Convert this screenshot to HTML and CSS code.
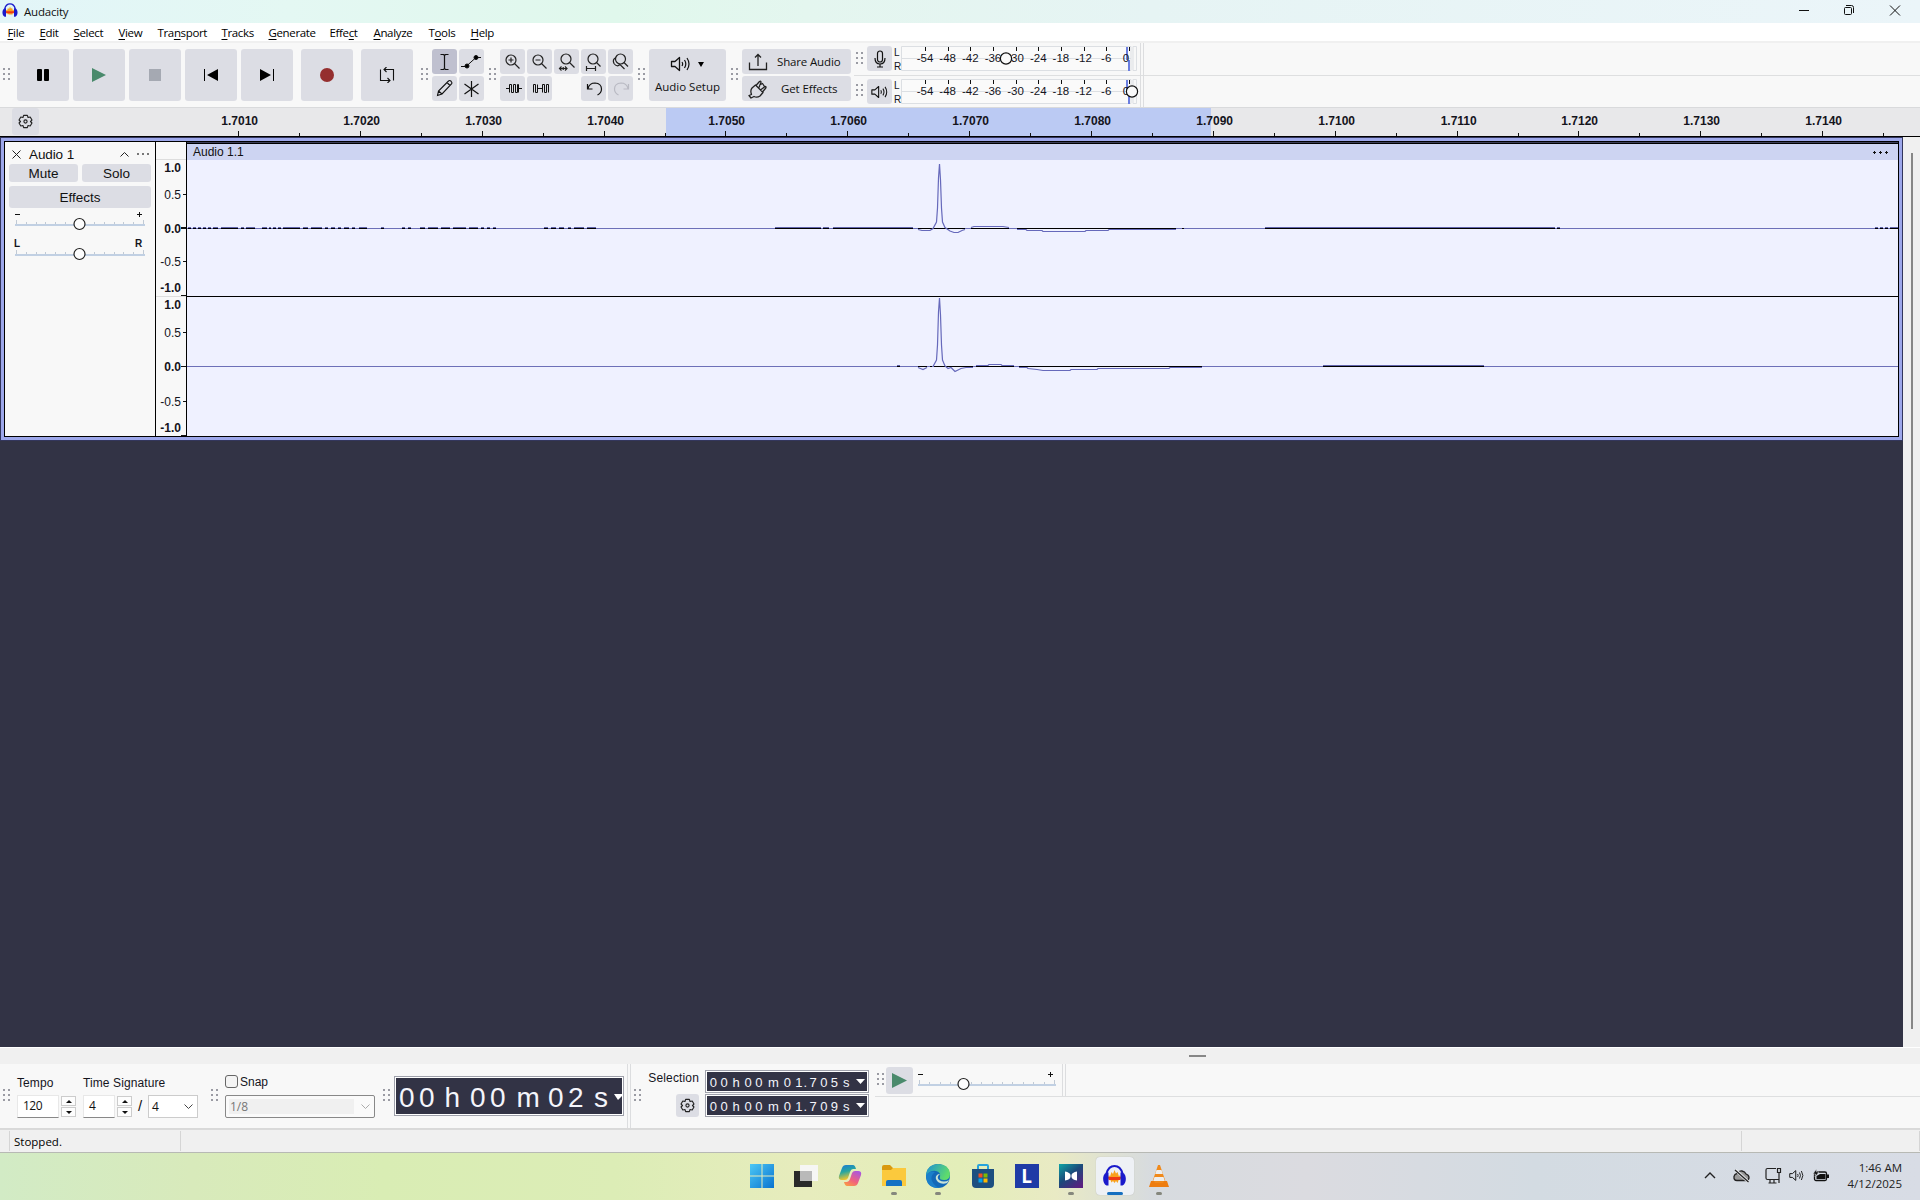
FILE: index.html
```html
<!DOCTYPE html>
<html lang="en">
<head>
<meta charset="utf-8">
<title>Audacity</title>
<link rel="stylesheet" href="styles.css">
</head>
<body>
<svg width="0" height="0" class="defs">
  <defs>
    <symbol id="grip" viewBox="0 0 8 13"><path d="M0 0h2v2H0zM5 0h2v2H5zM0 5h2v2H0zM5 5h2v2H5zM0 10h2v2H0zM5 10h2v2H5z" fill="#9a9ba3"/></symbol>
    <symbol id="gear" viewBox="0 0 16 16"><path d="M6 1.500h4l.7 2.200 2.300-.5 1.900 3.300L13.300 8l1.600 1.600-1.900 3.200-2.300-.5-.7 2.200H6l-.7-2.200-2.300.5-1.900-3.200L2.700 8 1.100 6.500 3 3.200l2.300.5z" fill="none" stroke="#222" stroke-width="1.200" stroke-linejoin="round"/><circle cx="8" cy="8" r="1.700" fill="none" stroke="#222" stroke-width="1.200"/></symbol>
    <symbol id="speaker" viewBox="0 0 20 16"><path d="M1 5.500h3.500L9 1.500v13L4.500 10.500H1z" fill="none" stroke="#111" stroke-width="1.300" stroke-linejoin="round"/><path d="M11.500 6q1.300 2 0 4M14 4q2.600 4 0 8M16.500 2q4 6 0 12" fill="none" stroke="#111" stroke-width="1.200"/></symbol>
    <symbol id="headphones" viewBox="0 0 24 22"><path d="M4 8.500Q6 1 12 1t8 7.500" fill="none" stroke="#1a1acb" stroke-width="2"/><path d="M5 13l1.500-3 1 1.500L9 7l1.500 2L12 5l1.500 3.500L15 7l1.500 4.500 1-1.500L19 13l-1.500 2-1-1-1.500 4-1.500-2-1.500 2-1.500-2L9 17.500 7.500 14l-1 1.500z" fill="#f9a11c"/><path d="M5.500 12h13l-1 3h-11z" fill="#ee3a16"/><path d="M4.500 7.500C0 8-1 18 4 20.500h2v-13zM19.500 7.500C24 8 25 18 20 20.500h-2v-13z" fill="#1a1acb"/></symbol>
  </defs>
</svg>

<header class="titlebar">
  <svg class="app-icon" width="16" height="15"><use href="#headphones"/></svg>
  <span class="app-name">Audacity</span>
  <svg class="window-controls" width="104" height="12" fill="none" stroke="#111"><path d="M0 5.500h10"/><path d="M45.500 3.500q0-1 1-1h5q1 0 1 1v5q0 1-1 1h-5q-1 0-1-1zM47 .5h5.500q2 0 2 2V8M91 .5l10 10M101 .5l-10 10"/></svg>
</header>

<nav class="menu">
  <span><u>F</u>ile</span><span><u>E</u>dit</span><span><u>S</u>elect</span><span><u>V</u>iew</span><span>Tra<u>n</u>sport</span><span><u>T</u>racks</span><span><u>G</u>enerate</span><span>Effe<u>c</u>t</span><span><u>A</u>nalyze</span><span>T<u>o</u>ols</span><span><u>H</u>elp</span>
</nav>

<section class="toolbar">
  <svg class="grip"><use href="#grip"/></svg>
  <div class="transport">
    <div class="button"><svg width="14" height="14"><rect x="1" y="1" width="5" height="12" rx="1"/><rect x="8" y="1" width="5" height="12" rx="1"/></svg></div>
    <div class="button"><svg width="14" height="14"><path d="M0 0l14 7-14 7z" fill="#4a8a6c"/></svg></div>
    <div class="button"><svg width="12" height="12"><path d="M0 0h12v12H0z" fill="#a5a9b2"/></svg></div>
    <div class="button"><svg width="14" height="12"><path d="M0 0h1v12H0zM14 0v12L3 6z"/></svg></div>
    <div class="button"><svg width="14" height="12"><path d="M13 0h1v12h-1zM0 0v12l11-6z"/></svg></div>
    <div class="button record"><svg width="14" height="14"><circle cx="7" cy="7" r="7" fill="#952f2f"/></svg></div>
    <div class="button loop"><svg width="16" height="16" fill="none" stroke="#111" stroke-width="1.100"><path d="M1.500 2.500v11H11M14.500 13.500v-11H5M7.500 0L5 2.500 7.500 5M8.500 11l2.500 2.500L8.500 16"/></svg></div>
  </div>
  <svg class="grip g-tools"><use href="#grip"/></svg>
  <div class="tools">
    <div class="button active"><svg width="25" height="25" fill="none" stroke="#111" stroke-width="1.200"><path d="M8.500 5.500h3l1 1 1-1h3M8.500 20.500h3l1-1 1 1h3M12.500 6.500v13"/></svg></div>
    <div class="button"><svg width="25" height="25" stroke="#111"><path d="M2 17.500h5l10-9h5" fill="none"/><circle cx="8" cy="17" r="2"/><circle cx="17" cy="8.500" r="2"/></svg></div>
    <div class="button"><svg width="25" height="25" fill="none" stroke="#111" stroke-width="1.100"><path d="M5.500 19.500l1-4.500L16.500 5q1.200-1 2.300 0l.7.800q1 1 0 2.200L10 18zM15 6.500l3 3M6.500 15l3.500 3"/></svg></div>
    <div class="button"><svg width="25" height="25" stroke="#111" stroke-width="1.200"><path d="M12.500 5v16M5.500 8l14 10M19.500 8l-14 10"/></svg></div>
  </div>
  <svg class="grip g-edit"><use href="#grip"/></svg>
  <div class="edit">
    <div class="button"><svg width="25" height="25" fill="none" stroke="#222" stroke-width="1.200"><circle cx="11" cy="11" r="5"/><path d="M14.500 14.500l5 5M8.500 11h5M11 8.500v5"/></svg></div>
    <div class="button"><svg width="25" height="25" fill="none" stroke="#222" stroke-width="1.200"><circle cx="11" cy="11" r="5"/><path d="M14.500 14.500l5 5M8.500 11h5"/></svg></div>
    <div class="button"><svg width="25" height="25" fill="none" stroke="#222" stroke-width="1.200"><circle cx="12" cy="10" r="5"/><path d="M15.500 13.500l5 5M5 19.500h8M7.500 17.500l-2 2 2 2M11 17.500l2 2-2 2M9.200 18v3"/></svg></div>
    <div class="button"><svg width="25" height="25" fill="none" stroke="#222" stroke-width="1.200"><circle cx="12" cy="10" r="5"/><path d="M15.500 13.500l4 4M5 19.500h10M5.500 17v5M14.500 17v5"/></svg></div>
    <div class="button"><svg width="25" height="25" fill="none" stroke="#222" stroke-width="1.200"><circle cx="12.500" cy="10" r="5"/><path d="M16 13.500l4 4M8 8.500q-4 2-2 6 3 4 6 1l4.500 4.500"/></svg></div>
    <div class="button"><svg width="25" height="25" fill="none" stroke="#111"><path d="M6 12.500h3.500M18.500 12.500H22M9.500 16.500V8.500h2v8h2v-8h2v8h2v-8h1v8"/></svg></div>
    <div class="button"><svg width="25" height="25" fill="none" stroke="#111"><path d="M10.500 12.500h5M6.500 16.500v-8h2v8h2v-8M15.500 16.500v-8h2v8h2v-8h2v8"/></svg></div>
    <div></div>
    <div class="button"><svg width="25" height="25" fill="none" stroke="#111" stroke-width="1.200"><path d="M7 12.500q1.500-5.500 7-5.500 6.500.500 6.500 6 0 4-4 6M6.500 8v5h5"/></svg></div>
    <div class="button"><svg width="25" height="25" fill="none" stroke="#b9bac3" stroke-width="1.200"><path d="M20 12.500Q18.500 7 13 7q-6.500.500-6.500 6 0 4 4 6M20.500 8v5h-5"/></svg></div>
  </div>
  <svg class="grip g-setup"><use href="#grip"/></svg>
  <div class="button setup">
    <div class="setup-icon"><svg width="21" height="16"><use href="#speaker"/></svg><svg width="6" height="5"><path d="M0 0h6L3 5z"/></svg></div>
    <span>Audio Setup</span>
  </div>
  <svg class="grip g-share"><use href="#grip"/></svg>
  <div class="share">
    <div class="button"><svg width="20" height="18" fill="none" stroke="#222" stroke-width="1.300"><path d="M1.500 9.500v7h17v-7M10 13V1.500M7 4.500l3-3 3 3"/></svg><span class="share-label">Share Audio</span></div>
    <div class="button"><svg width="20" height="20" fill="none" stroke="#222" stroke-width="1.300" stroke-linejoin="round"><path d="M1 16.500l2.500-1q-1.500-4 .5-6.500l3.500-3 7.500 7.500-3 3.500q-3 2-6 .5L3 19zM8 6.500l3.500-4q1.500-1 1.500.8L11 8.500M12.500 11l4.500-3.500q1.500 0 .8 1.500L14.500 13M11.500 6l3-1.500 2 3"/></svg><span class="effects-label">Get Effects</span></div>
  </div>
  <div class="meters">
    <div class="meter-row">
      <svg class="grip"><use href="#grip"/></svg>
      <div class="button"><svg width="12" height="18" fill="none" stroke="#111" stroke-width="1.200"><rect x="3.500" y="1" width="5" height="11" rx="2.500"/><path d="M1 8q0 6 5 6t5-6M6 14v3M3 17h6"/></svg></div>
      <svg class="meter" width="245" height="27" data-knob="113"></svg>
      <div class="divider"></div>
    </div>
    <div class="meter-row playback">
      <svg class="grip"><use href="#grip"/></svg>
      <div class="button"><svg width="17" height="14"><use href="#speaker"/></svg></div>
      <svg class="meter" width="245" height="27" data-knob="239"></svg>
      <div class="divider"></div>
    </div>
  </div>
</section>

<section class="timeline">
  <div class="button timeline-options"><svg width="15" height="15"><use href="#gear"/></svg></div>
  <svg id="ruler" width="1920" height="30" viewBox="0 107 1920 30"></svg>
</section>

<main class="project">
  <div class="tracks">
    <div class="track">
      <aside class="track-panel">
        <div class="track-head"><svg width="9" height="9" stroke="#222"><path d="M.5.5l8 8M8.500.5l-8 8"/></svg><span>Audio 1</span><svg width="9" height="5" fill="none" stroke="#222"><path d="M.5 4.500l4-4 4 4"/></svg><svg width="13" height="2"><path d="M0 0h2v2H0zM5 0h2v2H5zM10 0h2v2h-2z" fill="#777"/></svg></div>
        <div class="track-buttons"><div class="button">Mute</div><div class="button">Solo</div></div>
        <div class="button fx">Effects</div>
        <svg class="slider" width="134" height="22" data-w="130" data-at="65" data-l="−" data-r="+"></svg>
        <svg class="slider pan" width="134" height="22" data-w="130" data-at="65" data-l="L" data-r="R"></svg>
      </aside>
      <svg id="amplitude" width="30" height="296" viewBox="156 141 30 296"></svg>
      <div class="clip">
        <div class="clip-head"><span>Audio 1.1</span><svg width="15" height="3"><path d="M1 0h1v1h1v1H2v1H1V2H0V1h1zM7 0h1v1h1v1H8v1H7V2H6V1h1zM13 0h1v1h1v1h-1v1h-1V2h-1V1h1z" fill="#111"/></svg></div>
        <svg id="wave" width="1711" height="276" viewBox="187 160 1711 276"></svg>
      </div>
    </div>
  </div>
  <div class="v-scroll"><div class="v-thumb"></div></div>
</main>
<div class="h-scroll"><div class="h-thumb"></div></div>

<section class="bottom">
  <svg class="grip"><use href="#grip"/></svg>
  <div class="time-sig">
    <span class="arial">Tempo</span><span class="arial ts-label">Time Signature</span>
    <div class="fields">
      <div class="field tempo">120</div><div class="spin"><i></i><i class="down"></i></div>
      <div class="field beats">4</div><div class="spin"><i></i><i class="down"></i></div>
      <span class="slash">/</span>
      <div class="combo"><span>4</span><svg width="9" height="5" fill="none" stroke="#444"><path d="M.5.5l4 4 4-4"/></svg></div>
    </div>
  </div>
  <svg class="grip g-snap"><use href="#grip"/></svg>
  <div class="snap">
    <div class="snap-check"><i></i><span class="arial">Snap</span></div>
    <div class="combo disabled"><span>1/8</span><svg width="9" height="5" fill="none" stroke="#aaa"><path d="M.5.5l4 4 4-4"/></svg></div>
  </div>
  <svg class="grip g-time"><use href="#grip"/></svg>
  <svg class="time-big" width="230" height="40" viewBox="394 1076 230 40"><rect x="394.500" y="1076.500" width="229" height="39" fill="#fff" stroke="#9fa1ab"/><path d="M396 1078h226v36H396z" fill="#323345"/><text y="1107" x="399 419 444.500 470 490 516.500 548 568 594" font-size="28">00h00m02s</text><path d="M614 1094h8v2l-4 4z" fill="#fff"/></svg>
  <div class="divider"></div>
  <svg class="grip g-sel"><use href="#grip"/></svg>
  <div class="selection-side"><span class="arial">Selection</span><div class="button"><svg width="15" height="15"><use href="#gear"/></svg></div></div>
  <div class="selection-times">
    <svg width="164" height="23" viewBox="705 1070 164 23"><rect x="705.500" y="1070.500" width="163" height="22" fill="#fff" stroke="#9fa1ab"/><path d="M707 1072h160v19H707z" fill="#323345"/><text y="1087" x="709.700 720.500 732.500 744.500 755.200 768 783.700 795.200 803.500 809.500 820.200 830.800 843" font-size="13">00h00m01.705s</text><path d="M856 1079h9l-4.500 5z" fill="#fff"/></svg>
    <svg width="164" height="23" viewBox="705 1070 164 23"><rect x="705.500" y="1070.500" width="163" height="22" fill="#fff" stroke="#9fa1ab"/><path d="M707 1072h160v19H707z" fill="#323345"/><text y="1087" x="709.700 720.500 732.500 744.500 755.200 768 783.700 795.200 803.500 809.500 820.200 830.800 843" font-size="13">00h00m01.709s</text><path d="M856 1079h9l-4.500 5z" fill="#fff"/></svg>
  </div>
  <div class="speed">
    <svg class="grip"><use href="#grip"/></svg>
    <div class="button"><svg width="15" height="15"><path d="M0 0l15 7.500L0 15z" fill="#4a8a6c"/></svg></div>
    <svg class="slider" width="142" height="22" data-w="138" data-at="46" data-l="−" data-r="+"></svg>
    <div class="divider"></div>
  </div>
</section>

<footer class="status"><span class="s0"></span><span class="s1">Stopped.</span><span class="s2"></span><span class="s3"></span></footer>

<section class="taskbar">
  <div class="apps">
    <div><svg width="24" height="24"><defs><linearGradient id="win" x2="1" y2="1"><stop stop-color="#4cc8f5"/><stop offset="1" stop-color="#0873d0"/></linearGradient></defs><path d="M0 0h11.500v11.500H0zM12.500 0H24v11.500H12.500zM0 12.500h11.500V24H0zM12.500 12.500H24V24H12.500z" fill="url(#win)"/></svg></div>
    <div><svg width="24" height="24"><path d="M6 1h18v16H6z" fill="#f6f6f4"/><path d="M0 7h18v16H0z" fill="#2a2a2a"/><path d="M6 7h12v10H6z" fill="#b9b9b9"/></svg></div>
    <div><svg width="24" height="24"><defs><linearGradient id="cpA" x2=".3" y2="1"><stop stop-color="#1c78d8"/><stop offset=".5" stop-color="#27a6a0"/><stop offset="1" stop-color="#f3c52a"/></linearGradient><linearGradient id="cpB" x1=".8" x2=".2" y2="1"><stop stop-color="#a857e0"/><stop offset=".6" stop-color="#f0627e"/><stop offset="1" stop-color="#fa9a45"/></linearGradient></defs><path d="M8 1h7q2 0 3 4h-3q-2 0-3 3l-2 6q-1 2-3 2H4q-4 0-3-4l3-8q1-3 4-3z" fill="url(#cpA)"/><path d="M16 22H9q-2 0-3-4h3q2 0 3-3l2-6q1-2 3-2h3q4 0 3 4l-3 8q-1 3-4 3z" fill="url(#cpB)"/></svg></div>
    <div class="running"><svg width="26" height="24"><path d="M1 3q0-2 2-2h6l3 3h12q1 0 1 2v6H1z" fill="#d9990f"/><path d="M1 6h9l2-2h13v18H1z" fill="#fbc93d"/><path d="M5 22v-4q0-2 2-2h12q2 0 2 2v4z" fill="#1472c4"/></svg></div>
    <div class="running"><svg width="24" height="24"><defs><linearGradient id="edge" x2="1" y2=".4"><stop stop-color="#1b8fd8"/><stop offset="1" stop-color="#5fdc6b"/></linearGradient></defs><circle cx="12" cy="12" r="12" fill="#1269b8"/><path d="M0 10Q2 0 12 0q11 0 12 10 0 6-6 6-5 0-4-3 1-5-4-6Q4 6 0 12z" fill="url(#edge)"/><path d="M14 10q-4 3-1 6 5 3 10 0-1 2-2 3-5 2-9-1-4-4-1-7 1-1 3-1z" fill="#c9e3d8"/><path d="M0 11q4-5 9-3-5 4-3 9 3 6 8 7Q0 25 0 11z" fill="#1a7fca"/></svg></div>
    <div><svg width="24" height="24"><path d="M7 5V2q0-1 1-1h8q1 0 1 1v3" fill="none" stroke="#27a3dc" stroke-width="2"/><path d="M1 5h22v15q0 4-4 4H5q-4 0-4-4z" fill="#1d4f80"/><path d="M7.500 9.500h4v4h-4z" fill="#f25022"/><path d="M12.500 9.500h4v4h-4z" fill="#7fba00"/><path d="M7.500 14.500h4v4h-4z" fill="#00a4ef"/><path d="M12.500 14.500h4v4h-4z" fill="#ffb900"/></svg></div>
    <div><div class="l-app">L</div></div>
    <div class="running"><svg width="24" height="24"><defs><linearGradient id="cap" x2=".8" y2="1"><stop stop-color="#0ea5a5"/><stop offset=".5" stop-color="#1b4a7a"/><stop offset="1" stop-color="#5a1f80"/></linearGradient></defs><path d="M0 0h24v24H0z" fill="url(#cap)"/><path d="M6 7.500q5 1 5.500 3.500v2Q11 15.500 6 16.500zM18 7.500q-5 1-5.500 3.500v2q.5 2.500 5.500 3.500z" fill="#fff"/></svg></div>
    <div class="running current"><svg width="25" height="22"><use href="#headphones"/></svg></div>
    <div class="running"><svg width="22" height="24"><path d="M10 1h2l6 18H4z" fill="#f08a1c"/><path d="M8.500 6h5l1.300 4H7.200zM6.500 13h9l1.300 4H5.200z" fill="#eee"/><path d="M3 17h3l1 2h8l1-2h3l2 6H1z" fill="#ee7d10"/></svg></div>
  </div>
  <div class="tray">
    <svg width="12" height="7" fill="none" stroke="#222" stroke-width="1.400"><path d="M1 6l5-5 5 5"/></svg>
    <svg class="cloud" width="17" height="14"><path d="M4 11.500q-3.500 0-3-4Q1.500 5 4 4.500 6 1.500 9 2q3 .5 4 3 3 1 3 3.500 0 3-3 3z" fill="#999" stroke="#222" stroke-width="1.300"/><path d="M2.500 1l13 12" stroke="#e8ebee" stroke-width="3"/><path d="M2 1l13.500 12" stroke="#222" stroke-width="1.300"/></svg>
    <svg class="net" width="17" height="17" fill="none" stroke="#222" stroke-width="1.200"><path d="M11 1.500H2.500q-1.500 0-1.500 1.500v8q0 1.500 1.500 1.500h11M5 12.500V16M9 12.500V16M3.500 16h8M12.500 1.500h3v4h-3zM14 5.500V16"/></svg>
    <svg class="vol" width="15" height="13"><use href="#speaker"/></svg>
    <svg class="bat" width="17" height="13"><rect x="1.500" y="3" width="12" height="8.500" rx="1.500" fill="none" stroke="#111" stroke-width="1.300"/><path d="M3.500 7L7 5h5.500v5h-9zM14 5.500h2v3.500h-2z" fill="#111"/><path d="M3.500 0L0 5h2.500L2 8l4-5H3.500z" fill="#111" stroke="#dce0e6" stroke-width=".5"/></svg>
    <div class="clock"><span>1:46 AM</span><span>4/12/2025</span></div>
  </div>
</section>
<script src="script.js"></script>
</body>
</html>
```
FILE: styles.css
```css
* { box-sizing: border-box; }
body { margin: 0; width: 1920px; height: 1200px; overflow: hidden; background: #f8f8f8; color: #111; font: 11.5px/16px "Open Sans", "Noto Sans", sans-serif; display: flex; flex-direction: column; }
svg { display: block; flex: none; }
.defs { position: absolute; }
svg text { font-family: "Liberation Sans", Arial, sans-serif; fill: #14141c; }
.arial { font: 12px/14px "Liberation Sans", Arial, sans-serif; color: #14141c; }
.grip { width: 8px; height: 13px; }
.button { background: #dcdde4; border-radius: 3px; display: flex; align-items: center; justify-content: center; flex: none; }

.titlebar { height: 23px; flex: none; display: flex; align-items: center; background: linear-gradient(90deg, #e2f5f8, #e4f8f3 15%, #e0f8ec 32%, #e4f6ef 42%, #e6f4f4 60%, #ebf5f9); padding: 0 20px 2px 2px; }
.app-name { margin-left: 6px; letter-spacing: -.2px; padding-top: 2px; }
.window-controls { margin-left: auto; margin-right: -3px; }

.menu { height: 20px; flex: none; display: grid; grid-template-columns: 32px 34px 45px 39px 64px 47px 61px 44px 55px 42px auto; padding: 2px 0 0 7.500px; background: #fff; border-bottom: 2px solid #f0f0f0; letter-spacing: -.35px; color: #000; }
.menu u { text-underline-offset: 2px; }

.toolbar { height: 64px; flex: none; display: flex; align-items: flex-start; padding: 6px 0 0 3px; background: #f8f8f8; }
.toolbar > .grip { margin-top: 19px; }
.transport { display: flex; gap: 4px; margin-left: 6px; }
.transport .button { width: 52px; height: 52px; }
.record, .loop { margin-left: 4px; }
.g-tools { margin-left: 8px; }
.tools { display: grid; grid-template-columns: 25px 25px; gap: 2px; margin-left: 3px; }
.tools .button, .edit .button { height: 25px; }
.tools .active { background: #bfc0cf; }
.g-edit { margin-left: 5px; }
.edit { display: grid; grid-template-columns: repeat(5, 25px); gap: 2px; margin-left: 3px; }
.g-setup { margin-left: 5px; }
.setup { width: 77px; height: 52px; margin-left: 3px; flex-direction: column; justify-content: flex-start; padding-top: 7px; gap: 7px; }
.setup-icon { display: flex; align-items: center; gap: 7px; padding-right: 2px; }
.g-share { margin-left: 5px; }
.share { display: grid; gap: 2px; margin-left: 3px; }
.share .button { width: 109px; height: 25px; justify-content: flex-start; padding-left: 6px; }
.share-label { margin-left: 9px; letter-spacing: -.15px; }
.effects-label { margin-left: 13px; letter-spacing: -.1px; }
.meters { flex: 1; margin: -6px 0 0 3px; }
.meter-row { height: 33px; display: flex; padding: 2px 0 0 2px; border-bottom: 1px solid #dedfe0; }
.meter-row .grip { margin-top: 7px; }
.meter-row .button { width: 25px; height: 25px; margin: 1px 0 0 3px; }
.meter-row .divider { margin: -2px 0 0; height: 33px; }
.playback { height: 31px; border: 0; }
.playback .grip { margin-top: 6px; }
.playback .divider { height: 31px; }
.meter { margin-left: 3px; overflow: visible; }

.timeline { height: 30px; flex: none; display: grid; background: #e8e8ea; }
.timeline > * { grid-area: 1 / 1; }
.timeline-options { width: 27px; height: 27px; margin: 1px 0 0 12px; padding-right: 1px; z-index: 1; }

.project { height: 910px; flex: none; display: flex; }
.tracks { width: 1903px; background: #323345; }
.track { height: 302px; margin: 1px 0 0 1px; width: 1901px; display: flex; border: 3px solid #9da7ea; outline: 1px solid #33365c; }
.track-panel { width: 152px; height: 296px; border: 1px solid #000; background: #f8f8f8; padding: 4px 4px 0; }
.track-head { display: flex; align-items: center; height: 16px; padding-left: 3px; }
.track-head span { margin-left: 8px; width: 91px; letter-spacing: -.1px; padding-top: 1px; font: 13.500px/16px "Liberation Sans", Arial, sans-serif; }
.track-head svg:last-child { margin-left: 8px; }
.track-buttons { display: flex; gap: 4px; margin-top: 2px; }
.track-panel .button { font: 13.500px/18px "Liberation Sans", Arial, sans-serif; padding-top: 2px; }
.track-buttons .button { width: 69px; height: 18px; }
.fx { height: 22px; margin-top: 4px; }
.slider { margin-left: 5px; }
.track-panel .slider { margin-top: 1px; }
.track-panel .pan { margin-top: 8px; }
#amplitude { background: #f8f8f8; }
.clip { width: 1713px; height: 296px; border: 1px solid #000; }
.clip-head { height: 18px; border-top: 1px solid #3b3d58; box-shadow: inset 0 1px #000; background: #cdd4f2; display: flex; align-items: center; justify-content: space-between; padding: 1px 10px 0 6px; font: 12px/16px "Liberation Sans", Arial, sans-serif; }
#wave { background: #eff1ff; }
.v-scroll { flex: 1; background: #f0f0f0; padding: 16px 0 0 8px; }
.v-thumb { width: 2px; height: 876px; background: #878787; }
.h-scroll { height: 17px; flex: none; background: #f0f0f0; border-top: 1px solid #fff; padding: 7px 0 0 1189px; }
.h-thumb { width: 17px; height: 2px; background: #878787; }

.bottom { height: 65px; flex: none; display: flex; align-items: flex-start; padding-left: 3px; background: #f8f8f8; border-bottom: 1px solid #d9d9d9; }
.bottom > .grip { margin-top: 25px; }
.time-sig { display: grid; grid-template-columns: 66px 116px; margin: 12px 0 0 6px; row-gap: 5px; }
.time-sig .arial { letter-spacing: .1px; }
.fields { grid-column: 1 / 3; display: flex; font-size: 12px; }
.field { height: 23px; background: #fff; border: 1px solid #e8e8e8; border-bottom-color: #888; padding: 2px 0 0 5px; letter-spacing: -.5px; }
.tempo { width: 42px; }
.beats { width: 32px; margin-left: 7px; }
.spin { display: grid; gap: 1px; margin: 1px 0 0 2px; width: 15px; align-content: start; }
.spin i { height: 10px; border: 1px solid #ccc; background: #fdfdfd; display: flex; justify-content: center; align-items: center; }
.spin i::before { content: ""; border: 3px solid transparent; border-top: 0; border-bottom: 3px solid #111; }
.spin .down::before { transform: rotate(180deg); }
.slash { width: 16px; padding: 2px 0 0 6px; font: 15px/18px "Liberation Sans", Arial, sans-serif; }
.combo { width: 50px; height: 23px; border: 1px solid #ccc; background: #fff; display: flex; align-items: center; justify-content: space-between; padding: 0 4px 0 3px; }
.g-snap { margin-left: 12px; }
.snap { margin: 11px 0 0 6px; }
.snap-check { display: flex; align-items: center; gap: 2px; height: 13px; margin-bottom: 7px; }
.snap-check i { width: 13px; height: 13px; border: 1px solid #666; border-radius: 3px; background: #f4f4f4; }
.disabled { width: 150px; border-color: #888; color: #777; font-size: 12px; background: #fafafa; border-radius: 2px; }
.disabled span { background: #f0f0f0; width: 125px; line-height: 15px; padding-left: 1px; }
.g-time { margin-left: 8px; }
.time-big { margin: 12px 0 0 3px; }
.bottom svg text { fill: #f4f5fb; }
.divider { width: 4px; height: 64px; margin-left: 3px; border: solid #dcdddf; border-width: 0 1px; flex: none; }
.g-sel { margin-left: 3px; }
.selection-side { width: 51px; margin: 7px 0 0 6px; display: grid; justify-items: end; row-gap: 9px; }
.selection-side .arial { letter-spacing: .15px; }
.selection-side .button { width: 23px; height: 23px; padding-right: 1px; }
.selection-times { margin: 6px 0 0 6px; display: grid; row-gap: 1px; }
.speed { flex: 1; margin-left: 6px; height: 33px; display: flex; border-bottom: 1px solid #dedfe0; padding-left: 2px; }
.speed .grip { margin-top: 9px; }
.speed .button { width: 27px; height: 27px; margin: 3px 0 0 1px; }
.speed .slider { margin: 5px 0 0 4px; }
.speed .divider { height: 32px; margin-left: 3px; }

.status { height: 23px; flex: none; display: flex; background: #f0f0f0; border-top: 1px solid #dadada; line-height: 21px; padding-top: 1px; }
.status span { border-right: 1px solid #d5d5d5; height: 20px; }
.s0 { width: 10px; }
.s1 { width: 171px; padding-left: 4px; color: #000; }
.s2 { width: 1561px; }
.s3 { width: 178px; }

.taskbar { height: 48px; flex: none; display: flex; border-top: 1px solid #b7b9b4; padding-left: 740px; background: linear-gradient(90deg, #d2ebc5 0, #d8eabb 10%, #d9edb4 20%, #dcedb6 32%, #e7ecbd 42%, #e3eeb9 50%, #e9eac4 55%, #d7dbdf 60%, #dbdbe0 68%, #d3dbe2 80%, #d8dce5); }
.apps { display: flex; }
.apps > div { width: 44.100px; height: 46px; display: grid; place-items: center; position: relative; }
.running::after { content: ""; position: absolute; bottom: 4px; left: 19px; width: 6px; height: 3px; border-radius: 2px; background: #85877d; }
.current::before { content: ""; position: absolute; left: 3px; top: 4px; width: 38px; height: 38px; border-radius: 4px; background: #eef1f5; box-shadow: 0 0 1px #aaa; }
.current svg { position: relative; }
.current::after { left: 14px; width: 16px; background: #1670c0; }
.l-app { width: 24px; height: 24px; background: #1f3ba6; color: #fff; font: bold 19px/24px "Open Sans", sans-serif; text-align: center; }
.tray { margin-left: auto; display: flex; align-items: center; padding: 0 18px 2px 0; }
.cloud { margin-left: 17px; }
.net { margin-left: 15px; }
.vol { margin-left: 7px; }
.bat { margin-left: 9px; }
.clock { display: grid; text-align: right; margin-left: 12px; width: 60px; font-size: 11.500px; color: #222; }
```
FILE: script.js
```js
const rect = (x, y, w, h, fill) => `<rect x="${x}" y="${y}" width="${w}" height="${h}" fill="${fill}"/>`;

// Time ruler
let out = rect(666, 107, 545, 29, '#bbcaf3') + rect(0, 107, 1920, 1, '#d9dadc');
for (let i = 0; i < 14; i++) {
  const x = Math.round(238 + i * 121.85);
  out += rect(x, 131, 1, 5, '#111') + rect(x + 61, 133, 1, 3, '#111');
  out += `<text x="${x + 1.7}" y="125" text-anchor="middle" font-size="12" font-weight="bold">1.${7010 + i * 10}</text>`;
}
document.getElementById('ruler').innerHTML = out + rect(0, 136, 1920, 1, '#000');

// Level meters
document.querySelectorAll('.meter').forEach(m => {
  let s = '<path d="M6.500 1.500h229.500v24H6.500z" fill="#fafafa" stroke="#dcdfe3"/><path d="M7 13.500h229" stroke="#dcdfe3"/><path d="M238 1.500h3.500v24H238z" fill="none" stroke="#dcdfe3"/>';
  s += '<text x="-1" y="11" font-size="10">L</text><text x="-1" y="25" font-size="10">R</text>';
  s += rect(231, 2, 2, 13, '#6b7ee0') + rect(233, 15, 2, 11, '#6b7ee0');
  for (let i = 0; i < 10; i++) {
    const x = 30 + i * 22.65;
    s += rect(Math.round(x), 2, 1, 4, '#111');
    s += `<text x="${i === 9 ? 231 : x}" y="17" text-anchor="middle" font-size="11.500">${-54 + i * 6}</text>`;
  }
  s += `<circle cx="${m.dataset.knob - 2}" cy="13.500" r="5.600" fill="#fafafa" stroke="#111" stroke-width="1.200"/>`;
  m.innerHTML = s;
});

// Sliders
document.querySelectorAll('.slider').forEach(e => {
  const w = +e.dataset.w, at = +e.dataset.at;
  let s = rect(1, 15, w, 2, '#c1d0e3');
  for (let i = 0; i <= 13; i++) s += rect(Math.round(2 + i * (w - 3) / 13), i % 13 ? 13 : 11, 1, i % 13 ? 2 : 4, '#c1cad5');
  const sign = e.dataset.r === '+';
  if (sign) s += rect(1, 5, 5, 1, '#111') + rect(w - 7, 5, 5, 1, '#111') + rect(w - 5, 3, 1, 5, '#111');
  else s += `<text x="0" y="8" font-size="10" font-weight="bold">L</text><text x="${w - 9}" y="8" font-size="10" font-weight="bold">R</text>`;
  e.innerHTML = s + `<circle cx="${at + .5}" cy="15" r="5.500" fill="#fdfdfd" stroke="#222" stroke-width="1.200"/>`;
});

// Amplitude rulers
out = rect(156, 141, 30, 1, '#000') + rect(156, 159, 30, 1, '#ddd') + rect(156, 296, 30, 1, '#ddd');
[['1.0', 172], ['0.5', 199], ['0.0', 232.5], ['-0.5', 266], ['-1.0', 292], ['1.0', 309], ['0.5', 337], ['0.0', 371], ['-0.5', 406], ['-1.0', 432]].forEach(([t, y]) => {
  out += `<text x="181" y="${y}" text-anchor="end" font-size="12" font-weight="${t.endsWith('5') ? 'normal' : 'bold'}">${t}</text>`;
});
[194, 261, 332, 401].forEach(y => { out += rect(183, y, 3, 1, '#111'); });
out += rect(181, 227, 5, 2, '#111') + rect(181, 366, 5, 1, '#111') + rect(181, 295, 5, 1, '#111') + rect(181, 435, 5, 1, '#111') + rect(156, 436, 30, 1, '#000');
document.getElementById('amplitude').innerHTML = out;

// Waveforms
out = rect(187, 228, 1711, 1, '#6d70b8') + rect(187, 366, 1711, 1, '#6d70b8') + rect(187, 296, 1711, 1, '#000');
const raised = [[213, 218], [221, 238], [241, 244], [246, 255], [262, 267], [269, 271], [273, 276], [278, 281], [283, 300], [303, 308], [311, 322], [325, 328], [331, 335], [338, 341], [344, 349], [352, 355], [359, 367], [381, 384], [402, 405], [408, 411], [420, 425], [428, 438], [441, 450], [453, 466], [469, 478], [481, 484], [487, 490], [493, 496], [544, 548], [551, 556], [559, 564], [568, 571], [574, 584], [587, 596], [775, 821], [823, 829], [833, 913], [1265, 1555], [1557, 1560], [1875, 1878], [1880, 1883], [1885, 1888], [1890, 1898]];
for (let x = 188; x < 212; x += 5) raised.push([x, x + 3]);
raised.forEach(([a, b]) => { out += rect(a, 227, b - a, 1, '#6265ad') + rect(a, 228, b - a, 1, '#000'); });
[[918, 965], [971, 1009], [1017, 1176], [1182, 1184]].forEach(([a, b]) => { out += rect(a, 228, b - a, 1, '#000'); });
[[897, 900], [918, 927], [930, 932], [934, 973], [976, 1014], [1019, 1202], [1323, 1484]].forEach(([a, b]) => { out += rect(a, 366, b - a, 1, '#000'); });
out += rect(1323, 365, 161, 1, '#6265ad') + rect(897, 365, 3, 1, '#6265ad');
const curves = [
  '918,229.500 922,230.500 930,230.500 933,228.500 936.500,222 937.500,208 938.500,178 939.500,164 940.500,180 941.500,208 942.500,222 945,227.500 950,231 954,232.500 958,232.500 962,230.500 965,229.500',
  '971,227.500 974,226.500 1003,226.500 1009,227.500',
  '1017,229.500 1026,229.500 1027,230.500 1042,230.500 1043,231.500 1085,231.500 1086,230.500 1108,230.500 1109,229.500 1176,229.500',
  '918,367.500 923,369.500 927,367.500',
  '933,366.500 936.500,360 937.500,345 938.500,312 939.500,298 940.500,315 941.500,345 942.500,360 945,366 948,368.500 951,367.500 955,371.500 961,368.500 966,367.500 973,367.500',
  '976,365.500 988,365.500 989,364.500 1001,364.500 1002,365.500 1014,365.500',
  '1019,367.500 1027,367.500 1028,368.500 1037,369.500 1043,370.500 1070,370.500 1071,369.500 1097,369.500 1098,368.500 1169,368.500 1170,367.500 1202,367.500'
];
curves.forEach(p => { out += `<polyline points="${p}" fill="none" stroke="#6669bb" stroke-width="1.200"/>`; });
document.getElementById('wave').innerHTML = out;
```
